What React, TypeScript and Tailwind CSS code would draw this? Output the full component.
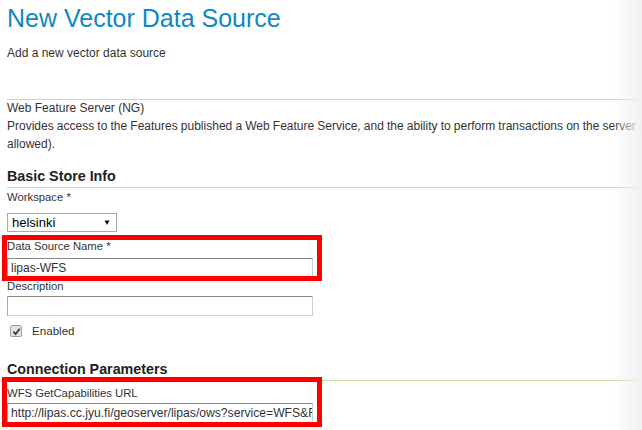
import React from "react";

export default function App() {
  const inputCls =
    "block w-[306px] h-[20px] border border-t-[#8a8a8a] border-l-[#a8a8a8] border-r-[#d0d0d0] border-b-[#d0d0d0] pl-[3px] text-[#333] bg-white outline-none";
  return (
    <div className="relative w-[642px] h-[430px] overflow-hidden bg-white font-['Liberation_Sans',Arial,sans-serif] text-[#333]">
      <div className="w-[760px] pl-[7px]">
        <h1 className="mt-[3px] text-[25px] leading-[30px] text-[#0f88c1] font-normal">
          New Vector Data Source
        </h1>
        <p className="mt-[11px] text-[12px] leading-[18px]">Add a new vector data source</p>
        <div className="mt-[37px] h-px bg-[#c5dd9f]" />
        <div className="text-[12px] leading-[17px]">Web Feature Server (NG)</div>
        <p className="text-[12px] [word-spacing:-0.18px] leading-[18px] w-[740px]">
          Provides access to the Features published a Web Feature Service, and the ability to perform transactions on the server (when supported / allowed).
        </p>
        <h2 className="mt-[14px] pb-[2px] text-[14.3px] leading-[18px] font-bold text-[#222] border-b border-[#c5dd9f]">
          Basic Store Info
        </h2>
        <div className="mt-[2px] text-[11.3px] leading-[14px]">Workspace *</div>
        <div className="mt-[9px] w-[110px] h-[19px] border border-[#a9a9a9] flex items-center justify-between pl-[4px] pr-[5px] bg-white">
          <span className="text-[13px] text-black leading-[16px]">helsinki</span>
          <span className="text-[8px] text-black leading-none">▼</span>
        </div>
        <div className="mt-[7px] text-[11.3px] leading-[14px]">Data Source Name *</div>
        <input className={"mt-[5px] text-[12px] " + inputCls} readOnly value="lipas-WFS" />
        <div className="mt-px text-[11.3px] leading-[14px]">Description</div>
        <input className={"mt-[3px] text-[12px] " + inputCls} readOnly value="" />
        <div className="mt-[7px] h-[16px] flex items-center">
          <div className="ml-[3px] w-[12px] h-[12px] rounded-[2px] border border-[#a0a0a0] bg-[#e4e4e4] flex items-center justify-center">
            <svg width="9" height="9" viewBox="0 0 10 10">
              <path d="M1.5 5.2 L4 7.8 L8.6 2" fill="none" stroke="#3a3a3a" strokeWidth="2" />
            </svg>
          </div>
          <span className="ml-[10px] text-[11.6px] leading-[14px]">Enabled</span>
        </div>
        <h2 className="mt-[21px] pb-[2px] text-[14.3px] leading-[18px] font-bold text-[#222] border-b border-[#c5dd9f]">
          Connection Parameters
        </h2>
        <div className="mt-[5px] text-[11.3px] leading-[14px]">WFS GetCapabilities URL</div>
        <input
          className={"mt-[3px] text-[12.15px] " + inputCls}
          readOnly
          value="http://lipas.cc.jyu.fi/geoserver/lipas/ows?service=WFS&REQUEST=GetCapabilities"
        />
      </div>

      <div className="absolute left-[2px] top-[235px] w-[320px] h-[46px] border-[5px] border-[#ff0000]" />
      <div className="absolute left-[2px] top-[377px] w-[320px] h-[50px] border-[5px] border-[#ff0000]" />
      <div className="absolute right-0 top-0 h-full w-[30px] bg-linear-to-r from-[rgba(240,240,240,0)] to-[#f1f1f1]" />
    </div>
  );
}
